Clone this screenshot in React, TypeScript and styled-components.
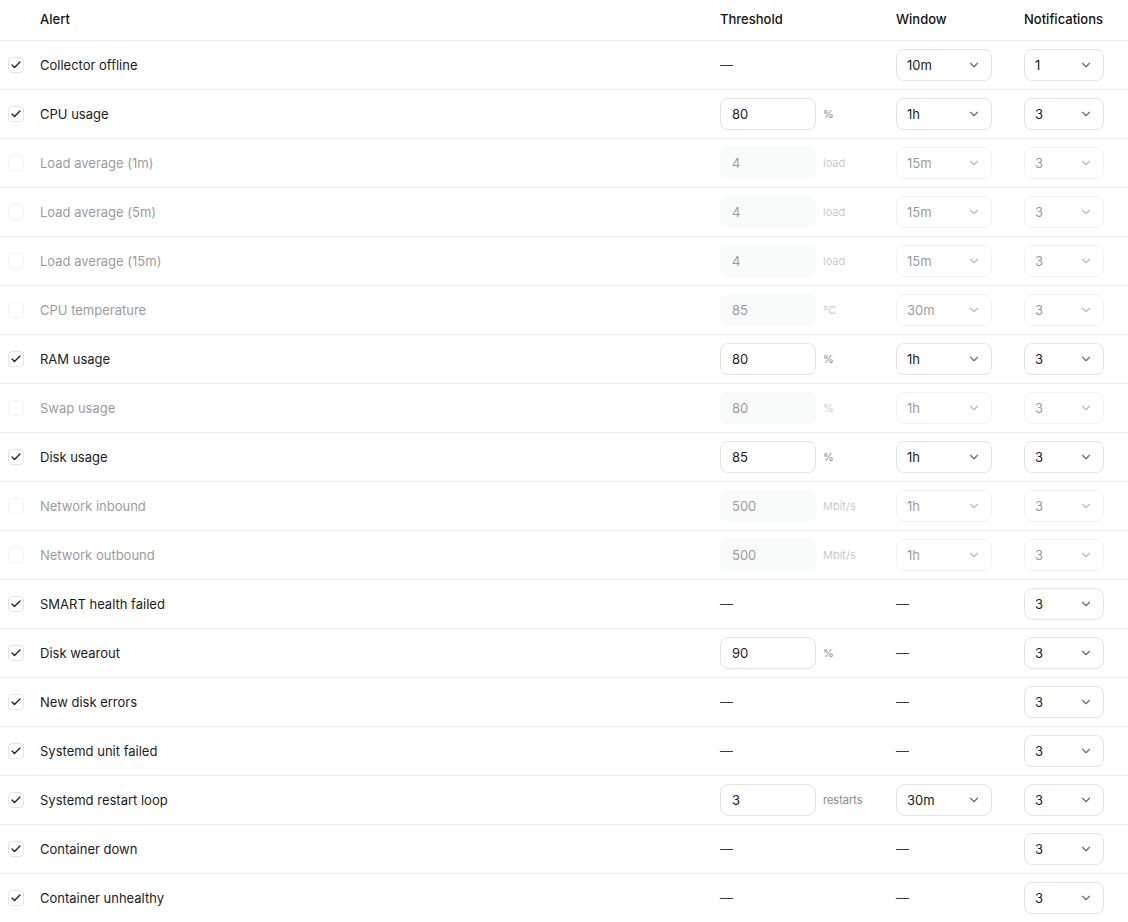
import React from "react";
import styled, { createGlobalStyle } from "styled-components";

const GlobalStyle = createGlobalStyle`
  html, body {
    margin: 0;
    padding: 0;
    background: #ffffff;
  }
  body {
    font-family: "Inter", "Noto Sans", sans-serif;
    font-size: 13px;
    color: #1c1c1e;
  }
`;

interface IAlertRow {
  name: string;
  enabled: boolean;
  threshold?: string;
  unit?: string;
  window?: string;
  notify: string;
}

const rows: IAlertRow[] = [
  { name: "Collector offline", enabled: true, window: "10m", notify: "1" },
  { name: "CPU usage", enabled: true, threshold: "80", unit: "%", window: "1h", notify: "3" },
  { name: "Load average (1m)", enabled: false, threshold: "4", unit: "load", window: "15m", notify: "3" },
  { name: "Load average (5m)", enabled: false, threshold: "4", unit: "load", window: "15m", notify: "3" },
  { name: "Load average (15m)", enabled: false, threshold: "4", unit: "load", window: "15m", notify: "3" },
  { name: "CPU temperature", enabled: false, threshold: "85", unit: "°C", window: "30m", notify: "3" },
  { name: "RAM usage", enabled: true, threshold: "80", unit: "%", window: "1h", notify: "3" },
  { name: "Swap usage", enabled: false, threshold: "80", unit: "%", window: "1h", notify: "3" },
  { name: "Disk usage", enabled: true, threshold: "85", unit: "%", window: "1h", notify: "3" },
  { name: "Network inbound", enabled: false, threshold: "500", unit: "Mbit/s", window: "1h", notify: "3" },
  { name: "Network outbound", enabled: false, threshold: "500", unit: "Mbit/s", window: "1h", notify: "3" },
  { name: "SMART health failed", enabled: true, notify: "3" },
  { name: "Disk wearout", enabled: true, threshold: "90", unit: "%", notify: "3" },
  { name: "New disk errors", enabled: true, notify: "3" },
  { name: "Systemd unit failed", enabled: true, notify: "3" },
  { name: "Systemd restart loop", enabled: true, threshold: "3", unit: "restarts", window: "30m", notify: "3" },
  { name: "Container down", enabled: true, notify: "3" },
  { name: "Container unhealthy", enabled: true, notify: "3" },
];

const Table = styled.div`
  width: 100%;
`;

const Grid = styled.div`
  display: grid;
  grid-template-columns: 40px 680px 176px 128px 104px;
  align-items: center;
  border-bottom: 1px solid #ececec;
  box-sizing: border-box;
`;

const HeaderRow = styled(Grid)`
  height: 41px;
  padding-bottom: 2px;
  font-weight: 500;
  color: #111111;
`;

const Row = styled(Grid)<{ $off: boolean }>`
  height: 49px;
  padding-bottom: 1px;
  & > * {
    opacity: ${(p) => (p.$off ? 0.45 : 1)};
  }
  &:last-child {
    border-bottom: none;
  }
`;

const CheckCell = styled.div`
  display: flex;
  padding-left: 8px;
`;

const Box = styled.span`
  width: 16px;
  height: 16px;
  box-sizing: border-box;
  border: 1px solid #e4e4e4;
  border-radius: 4px;
  display: flex;
  align-items: center;
  justify-content: center;
  color: #1c1c1e;
`;

const Label = styled.div`
  color: #1c1c1e;
`;

const Cell = styled.div`
  display: flex;
  align-items: center;
  gap: 7px;
`;

const NumInput = styled.div<{ $off: boolean }>`
  width: 96px;
  height: 32px;
  box-sizing: border-box;
  border: 1px solid ${(p) => (p.$off ? "#f1f1f1" : "#e4e4e4")};
  background: ${(p) => (p.$off ? "#f3f4f5" : "#ffffff")};
  border-radius: 8px;
  padding-left: 11px;
  display: flex;
  align-items: center;
  color: #1c1c1e;
`;

const Unit = styled.span`
  font-size: 11px;
  color: #8a8a8e;
`;

const Dash = styled.span`
  color: #3a3a3c;
`;

const Select = styled.div<{ $w: number }>`
  width: ${(p) => p.$w}px;
  height: 32px;
  box-sizing: border-box;
  border: 1px solid #e4e4e4;
  border-radius: 8px;
  padding: 0 10px 0 10px;
  display: flex;
  align-items: center;
  justify-content: space-between;
  color: #1c1c1e;
`;

const Chevron = () => (
  <svg width="14" height="14" viewBox="0 0 24 24" fill="none" stroke="#6b6b70" strokeWidth="2" strokeLinecap="round" strokeLinejoin="round">
    <path d="m6 9 6 6 6-6" />
  </svg>
);

const Check = () => (
  <svg width="12" height="12" viewBox="0 0 24 24" fill="none" stroke="currentColor" strokeWidth="2.6" strokeLinecap="round" strokeLinejoin="round">
    <path d="M20 6 9 17l-5-5" />
  </svg>
);

function App() {
  return (
    <>
      <GlobalStyle />
      <Table>
        <HeaderRow>
          <div />
          <div>Alert</div>
          <div>Threshold</div>
          <div>Window</div>
          <div>Notifications</div>
        </HeaderRow>
        {rows.map((r) => {
          const off = !r.enabled;
          return (
            <Row key={r.name} $off={off}>
              <CheckCell>
                <Box>{r.enabled && <Check />}</Box>
              </CheckCell>
              <Label>{r.name}</Label>
              <Cell>
                {r.threshold ? (
                  <>
                    <NumInput $off={off}>{r.threshold}</NumInput>
                    <Unit>{r.unit}</Unit>
                  </>
                ) : (
                  <Dash>—</Dash>
                )}
              </Cell>
              <Cell>
                {r.window ? (
                  <Select $w={96}>
                    {r.window}
                    <Chevron />
                  </Select>
                ) : (
                  <Dash>—</Dash>
                )}
              </Cell>
              <Cell>
                <Select $w={80}>
                  {r.notify}
                  <Chevron />
                </Select>
              </Cell>
            </Row>
          );
        })}
      </Table>
    </>
  );
}

export default App;
